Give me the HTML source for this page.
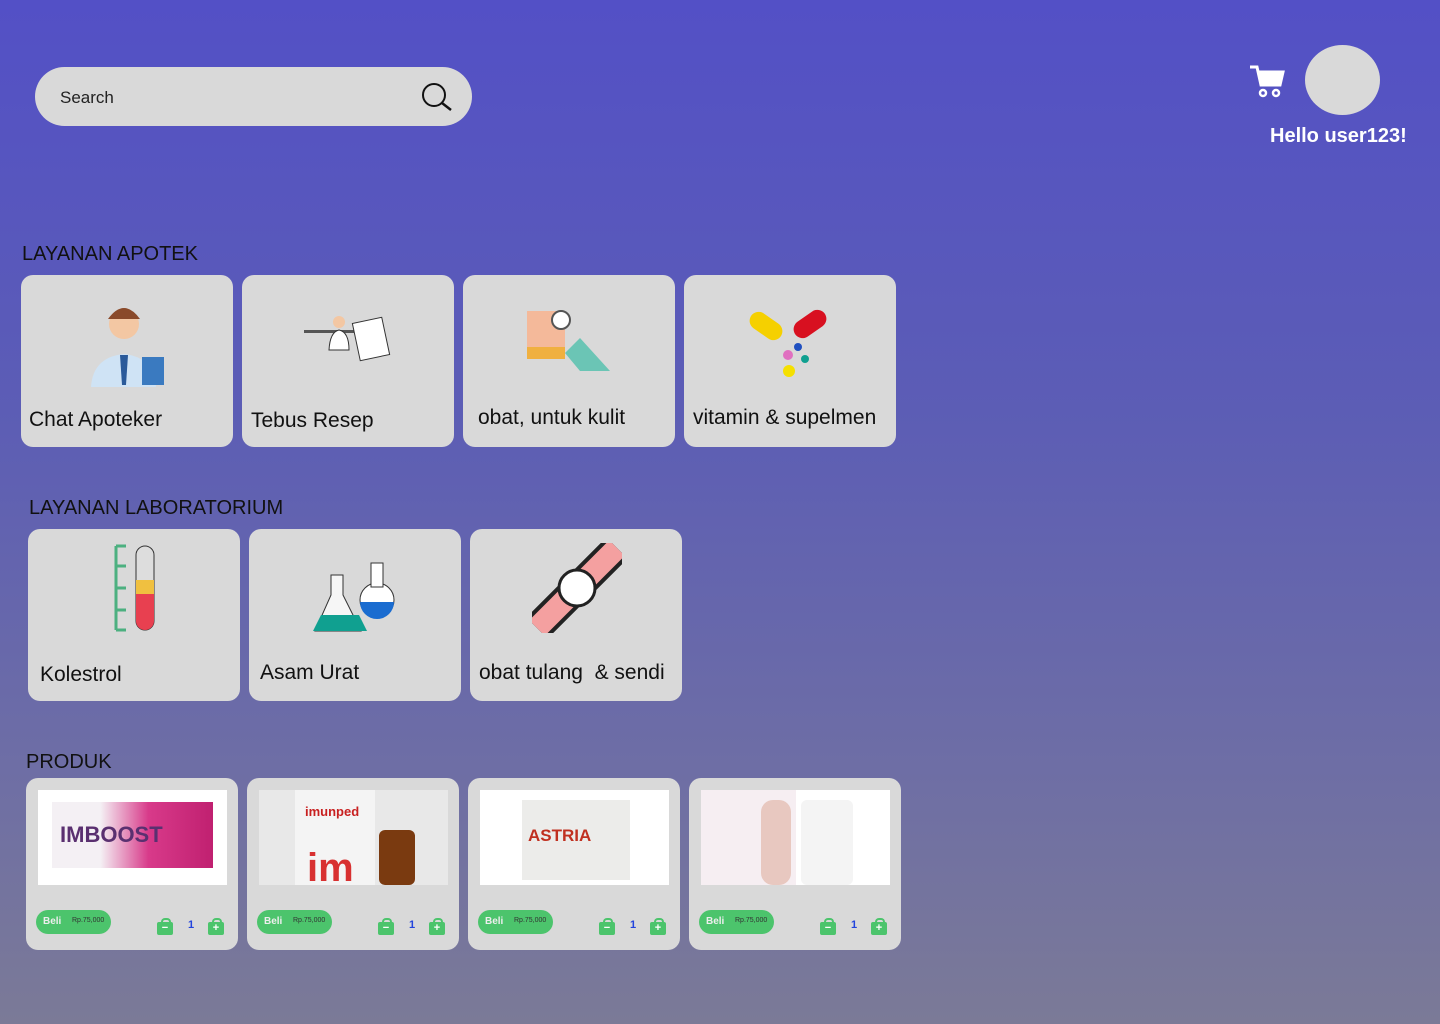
<!DOCTYPE html>
<html><head><meta charset="utf-8"><style>
*{margin:0;padding:0;box-sizing:border-box}
body{width:1440px;height:1024px;overflow:hidden;background:linear-gradient(180deg,#5350c6 0%,#5c5db5 40%,#6e6ea5 75%,#7b7a97 100%);font-family:"Liberation Sans",sans-serif;position:relative;color:#111}
.abs{position:absolute}
.search{left:35px;top:67px;width:437px;height:59px;border-radius:30px;background:#d9d9d9}
.search span{position:absolute;left:25px;top:21px;font-size:17px;color:#222}
.card{position:absolute;width:212px;height:172px;background:#d9d9d9;border-radius:12px}
.card .t{position:absolute;font-size:21px;color:#111;white-space:nowrap}
.h{position:absolute;font-size:20px;color:#111}
.img{position:absolute;left:12px;top:12px;width:189px;height:95px;background:#fff;overflow:hidden}
.beli{position:absolute;left:10px;top:132px;width:75px;height:24px;border-radius:12px;background:#4cc46c;color:#eee;font-size:10px;font-weight:bold}
.beli b{position:absolute;left:7px;top:6px}
.beli i{position:absolute;left:36px;top:7px;font-size:7px;font-style:normal;color:#333;font-weight:normal}
.bag{position:absolute;top:144px;width:16px;height:13px;background:#4cc46c;border-radius:2px;color:#fff;font-size:11px;text-align:center;line-height:13px;font-weight:bold}
.bag:before{content:"";position:absolute;left:4px;top:-4px;width:6px;height:5px;border:2px solid #4cc46c;border-bottom:none;border-radius:4px 4px 0 0}
.q{position:absolute;left:162px;top:141px;font-size:11px;color:#2244dd;font-weight:bold}
</style></head><body>
<div class="abs search"><span>Search</span>
<svg class="abs" style="left:384px;top:15px" width="36" height="30" viewBox="0 0 36 30"><circle cx="15" cy="13" r="11" fill="none" stroke="#111" stroke-width="2"/><line x1="23" y1="21" x2="32" y2="28" stroke="#111" stroke-width="2.5"/></svg></div>
<svg class="abs" style="left:1249px;top:64px" width="36" height="34" viewBox="0 0 36 34"><path d="M1 3h7l4 18h19l3-13H10" fill="none" stroke="#fff" stroke-width="3"/><path d="M10 8h24l-3 13H12z" fill="#fff"/><circle cx="14" cy="29" r="3" fill="none" stroke="#fff" stroke-width="2.5"/><circle cx="27" cy="29" r="3" fill="none" stroke="#fff" stroke-width="2.5"/></svg>
<div class="abs" style="left:1305px;top:45px;width:75px;height:70px;border-radius:50%;background:#d9d9d9"></div>
<div class="abs" style="left:1270px;top:125px;font-size:20px;font-weight:bold;color:#fff">Hello user123!</div>

<div class="h" style="left:22px;top:243px">LAYANAN APOTEK</div>
<div class="card" style="left:21px;top:275px"><svg class="abs" style="left:65px;top:22px" width="82" height="92"><circle cx="38" cy="27" r="15" fill="#f3c7a3"/><path d="M22 22q16-22 32 0" fill="#8a4a2a"/><path d="M5 90q2-30 33-33q30 3 32 33z" fill="#cfe3f5"/><path d="M34 58h8l-2 30h-4z" fill="#2a5a9a"/><rect x="56" y="60" width="22" height="28" fill="#3a7ac0"/></svg><div class="t" style="left:8px;top:133px">Chat Apoteker</div></div>
<div class="card" style="left:242px;top:275px"><svg class="abs" style="left:62px;top:35px" width="90" height="70"><rect x="0" y="20" width="55" height="3" fill="#555"/><circle cx="35" cy="12" r="6" fill="#f3c7a3"/><path d="M25 40q1-18 10-20q10 2 10 20z" fill="#fff" stroke="#333"/><rect x="52" y="10" width="30" height="38" fill="#fff" stroke="#333" transform="rotate(-12 67 29)"/></svg><div class="t" style="left:9px;top:134px">Tebus Resep</div></div>
<div class="card" style="left:463px;top:275px"><svg class="abs" style="left:62px;top:28px" width="90" height="70"><rect x="2" y="8" width="38" height="48" fill="#f4b99a"/><rect x="2" y="44" width="38" height="12" fill="#f0b040"/><circle cx="36" cy="17" r="9" fill="#fff" stroke="#555" stroke-width="2"/><path d="M40 50l15-15l30 33h-30z" fill="#6bc5b5"/></svg><div class="t" style="left:15px;top:131px">obat, untuk kulit</div></div>
<div class="card" style="left:684px;top:275px"><svg class="abs" style="left:62px;top:32px" width="90" height="75"><rect x="2" y="10" width="36" height="18" rx="9" fill="#f5d000" transform="rotate(35 20 19)"/><rect x="46" y="8" width="36" height="18" rx="9" fill="#d81020" transform="rotate(-35 64 17)"/><circle cx="42" cy="48" r="5" fill="#e070c0"/><circle cx="52" cy="40" r="4" fill="#2050c0"/><circle cx="59" cy="52" r="4" fill="#10a090"/><circle cx="43" cy="64" r="6" fill="#f5e000"/></svg><div class="t" style="left:9px;top:131px">vitamin &amp; supelmen</div></div>

<div class="h" style="left:29px;top:497px">LAYANAN LABORATORIUM</div>
<div class="card" style="left:28px;top:529px"><svg class="abs" style="left:86px;top:15px" width="45" height="90"><path d="M2 2v84M2 2h10M2 22h10M2 44h10M2 66h10M2 86h10" stroke="#4cb080" stroke-width="3" fill="none"/><rect x="22" y="2" width="18" height="84" rx="9" fill="#ddd" stroke="#333"/><rect x="22" y="36" width="18" height="50" rx="9" fill="#e84050"/><rect x="22" y="36" width="18" height="14" fill="#f0c040"/></svg><div class="t" style="left:12px;top:134px">Kolestrol</div></div>
<div class="card" style="left:249px;top:529px"><svg class="abs" style="left:64px;top:16px" width="90" height="90"><path d="M18 30h12v20l18 36h-46l16-36z" fill="#f6f6f6" stroke="#333"/><path d="M8 70h38l8 16h-54z" fill="#10a090"/><circle cx="64" cy="55" r="17" fill="#fff" stroke="#333"/><path d="M47 57a17 17 0 0 0 34 0z" fill="#1a6cd0"/><rect x="58" y="18" width="12" height="24" fill="#fff" stroke="#333"/></svg><div class="t" style="left:11px;top:132px">Asam Urat</div></div>
<div class="card" style="left:470px;top:529px"><svg class="abs" style="left:62px;top:14px" width="90" height="90"><path d="M5 85L85 5" stroke="#222" stroke-width="30"/><path d="M5 85L85 5" stroke="#f4a0a0" stroke-width="22"/><circle cx="45" cy="45" r="18" fill="#fff" stroke="#222" stroke-width="3"/></svg><div class="t" style="left:9px;top:132px">obat tulang&nbsp; &amp; sendi</div></div>

<div class="h" style="left:26px;top:751px">PRODUK</div>
<div class="card" style="left:26px;top:778px"><div class="img"><div class="abs" style="left:14px;top:12px;width:161px;height:66px;background:linear-gradient(90deg,#f4f0f4 30%,#d83a8a 60%,#c02070)"></div><div class="abs" style="left:22px;top:32px;font-size:22px;font-weight:bold;color:#5a3070">IMBOOST</div></div><div class="beli"><b>Beli</b><i>Rp.75,000</i></div><div class="bag" style="left:131px">−</div><div class="q">1</div><div class="bag" style="left:182px">+</div></div>
<div class="card" style="left:247px;top:778px"><div class="img" style="background:#e8e8e8"><div class="abs" style="left:36px;top:0;width:80px;height:95px;background:#f4f4f4"></div><div class="abs" style="left:46px;top:14px;font-size:13px;font-weight:bold;color:#c82020">imunped</div><div class="abs" style="left:48px;top:58px;font-size:40px;font-weight:bold;color:#d83030;line-height:40px">im</div><div class="abs" style="left:120px;top:40px;width:36px;height:55px;background:#7a3a10;border-radius:6px"></div></div><div class="beli"><b>Beli</b><i>Rp.75,000</i></div><div class="bag" style="left:131px">−</div><div class="q">1</div><div class="bag" style="left:182px">+</div></div>
<div class="card" style="left:468px;top:778px"><div class="img"><div class="abs" style="left:42px;top:10px;width:108px;height:80px;background:#ececea"></div><div class="abs" style="left:48px;top:36px;font-size:17px;font-weight:bold;color:#c03020">ASTRIA</div></div><div class="beli"><b>Beli</b><i>Rp.75,000</i></div><div class="bag" style="left:131px">−</div><div class="q">1</div><div class="bag" style="left:182px">+</div></div>
<div class="card" style="left:689px;top:778px"><div class="img"><div class="abs" style="left:0;top:0;width:95px;height:95px;background:#f6eef2"></div><div class="abs" style="left:60px;top:10px;width:30px;height:85px;background:#e8c8c0;border-radius:12px"></div><div class="abs" style="left:100px;top:10px;width:52px;height:85px;background:#f4f4f4;border-radius:6px"></div></div><div class="beli"><b>Beli</b><i>Rp.75,000</i></div><div class="bag" style="left:131px">−</div><div class="q">1</div><div class="bag" style="left:182px">+</div></div>
</body></html>
